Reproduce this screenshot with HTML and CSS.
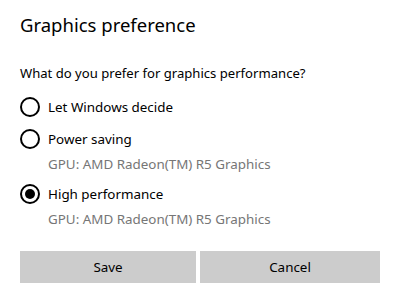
FILE: index.html
```html
<!DOCTYPE html>
<html>
<head>
<meta charset="utf-8">
<link rel="stylesheet" href="styles.css">
</head>
<body>
<div class="dialog">
  <h1 class="title">Graphics preference</h1>
  <p class="question">What do you prefer for graphics performance?</p>
  <div class="options">
    <label class="option">
      <span class="radio"></span>
      <span class="label">Let Windows decide</span>
    </label>
    <label class="option">
      <span class="radio"></span>
      <span class="label">Power saving</span>
    </label>
    <div class="gpu">GPU: AMD Radeon(TM) R5 Graphics</div>
    <label class="option">
      <span class="radio checked"></span>
      <span class="label">High performance</span>
    </label>
    <div class="gpu">GPU: AMD Radeon(TM) R5 Graphics</div>
  </div>
  <div class="buttons">
    <button class="btn">Save</button>
    <button class="btn">Cancel</button>
  </div>
</div>
</body>
</html>
```
FILE: styles.css
```css
html, body {
  margin: 0;
  padding: 0;
  background: #ffffff;
}
body {
  font-family: "Noto Sans", "Open Sans", sans-serif;
  color: #000000;
  width: 401px;
  height: 304px;
  overflow: hidden;
}
.dialog {
  padding: 11px 21px 0 20px;
  display: flex;
  flex-direction: column;
}
.title {
  margin: 0;
  font-size: 18.5px;
  font-weight: 400;
  line-height: 28px;
}
.question {
  margin: 24px 0 0 0;
  font-size: 13.1px;
  line-height: 20px;
}
.options {
  margin-top: 8px;
  display: flex;
  flex-direction: column;
}
.option {
  display: flex;
  align-items: center;
  height: 32px;
}
.radio {
  box-sizing: border-box;
  width: 20px;
  height: 20px;
  border: 2px solid #000;
  border-radius: 50%;
  display: flex;
  align-items: center;
  justify-content: center;
  flex: none;
}
.radio.checked::after {
  content: "";
  width: 10px;
  height: 10px;
  border-radius: 50%;
  background: #000;
}
.label {
  margin-left: 8px;
  font-size: 13.4px;
}
.gpu {
  padding-left: 28px;
  font-size: 13.4px;
  color: #767676;
  line-height: 18px;
  margin-bottom: 5px;
}
.buttons {
  margin-top: 18px;
  display: grid;
  grid-template-columns: 176px 180px;
  gap: 4px;
}
.btn {
  height: 32px;
  border: none;
  background: #cccccc;
  font-family: inherit;
  font-size: 13.4px;
  color: #000;
  padding: 0;
}
```
